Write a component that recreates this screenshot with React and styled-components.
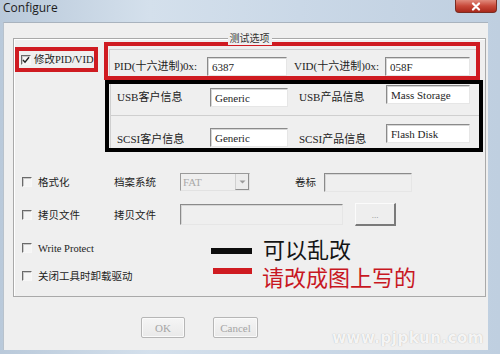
import React from "react";
import styled, { createGlobalStyle } from "styled-components";

const Global = createGlobalStyle`
  html, body { margin: 0; padding: 0; }
  body {
    width: 500px; height: 354px; overflow: hidden;
    background: #c5d3e2;
    font-family: "Liberation Serif", "Noto Sans CJK SC", serif;
  }
`;

const Frame = styled.div`
  position: relative;
  width: 500px; height: 354px;
  display: flex; flex-direction: column;
  overflow: hidden;
  background: linear-gradient(90deg, #b9c9da 0%, #d4e0ec 30%, #cad8e7 60%, #bfcfe0 100%);
`;

const TitleBar = styled.div`
  flex: none; height: 22px;
  display: flex; align-items: flex-start; justify-content: space-between;
`;

const Title = styled.span`
  font-family: "Open Sans", "DejaVu Sans", sans-serif;
  font-size: 12px; line-height: 16px; color: #1c1c1c;
  padding: 0 0 0 3px;
`;

const Close = styled.div`
  width: 42px; height: 13px; margin-right: 3px;
  box-sizing: border-box;
  border: 1px solid #7a2c22; border-top: none;
  border-radius: 0 0 4px 4px;
  background: linear-gradient(#e08a7c, #c8493a 50%, #a9281b);
  display: flex; align-items: center; justify-content: center;
`;

const Client = styled.div`
  flex: 1;
  margin: 0 12px 4px 3px;
  background: #efefef;
  border-top: 1px solid #a9b3be;
  border-left: 1px solid #b8c2cc;
  display: flex; flex-direction: column;
  padding: 15px 0 0 9px;
`;

const GroupBox = styled.div`
  position: relative;
  width: 473px; height: 259px;
  box-sizing: border-box;
  border: 1px solid #a9a9a9;
  box-shadow: inset 1px 1px 0 #ffffff;
  display: flex; flex-direction: column;
`;

const Caption = styled.span`
  position: absolute; top: -8px; left: 50%;
  transform: translateX(-50%);
  padding: 0 2px;
  background: #efefef;
  font-family: "Noto Sans CJK SC", sans-serif;
  font-size: 10px; line-height: 14px; color: #333;
`;

const TopSection = styled.div`
  display: flex; align-items: flex-start;
`;

const MarkBox = styled.div`
  box-sizing: border-box;
  width: ${(p) => p.$w}px; height: ${(p) => p.$h}px;
  border: 4px solid ${(p) => p.$color};
  margin: ${(p) => p.$m || "0"};
  overflow: hidden;
  display: flex; flex-direction: column;
`;

const CheckLine = styled.label`
  display: flex; align-items: center; gap: ${(p) => p.$gap || 6}px;
  padding-left: ${(p) => p.$pl || 0}px;
  font-size: ${(p) => p.$fs || 11}px; line-height: 14px; color: #222;
  white-space: nowrap;
  flex: ${(p) => (p.$grow ? 1 : "none")};
`;

const Box = styled.span`
  flex: none;
  width: 10px; height: 10px; box-sizing: border-box;
  border-top: 1px solid #6a6a6a; border-left: 1px solid #6a6a6a;
  border-right: 1px solid #f7f7f7; border-bottom: 1px solid #f7f7f7;
  box-shadow: inset 1px 1px 0 #c9c9c9;
  background: #f5f5f5;
  display: flex; align-items: center; justify-content: center;
`;

const RightCol = styled.div`
  margin: 3px 0 0 6px;
  display: flex; flex-direction: column;
`;

const Panel = styled.div`
  flex: ${(p) => (p.$h ? "none" : 1)};
  margin-left: 1px;
  border-left: 1px solid #cfcfcf;
  border-top: ${(p) => (p.$top ? "1px solid #cfcfcf" : "none")};
  display: grid;
  grid-template-columns: ${(p) => p.$cols};
  align-items: start;
  padding: ${(p) => p.$pt}px 0 0 ${(p) => p.$pl}px;
  margin-top: ${(p) => p.$mt || 0}px;
  height: ${(p) => (p.$h ? `${p.$h}px` : "auto")};
  box-sizing: border-box;
`;

const Label = styled.span`
  font-size: ${(p) => p.$fs || 11}px; line-height: 19px; color: #222;
  padding-left: ${(p) => p.$pl || 0}px;
  white-space: nowrap;
  margin-top: ${(p) => p.$dy || 0}px;
`;

const Field = styled.div`
  width: ${(p) => p.$w}px; height: ${(p) => p.$h || 19}px;
  box-sizing: border-box;
  background: ${(p) => (p.$disabled ? "#efefef" : "#ffffff")};
  border-top: 1px solid #8a8a8a; border-left: 1px solid #8a8a8a;
  border-right: 1px solid #e6e6e6; border-bottom: 1px solid #e6e6e6;
  box-shadow: inset 1px 1px 0 #d6d6d6;
  font-size: 11px; line-height: 13px; color: #1e1e1e;
  padding: 3px 0 0 4px;
  margin-top: ${(p) => p.$dy || 0}px;
  white-space: nowrap; overflow: hidden;
`;

const LowerRow = styled.div`
  display: flex; align-items: center;
  height: ${(p) => p.$h}px;
  margin-top: ${(p) => p.$mt}px;
  padding-left: 8px;
`;

const Cell = styled.div`
  flex: none;
  width: ${(p) => p.$w}px;
  display: flex; align-items: center;
`;

const CnText = styled.span`
  font-family: "Noto Sans CJK SC", sans-serif;
  font-size: 10.5px; line-height: 14px; color: #222;
  padding-left: ${(p) => p.$pl || 0}px;
  white-space: nowrap;
`;

const Combo = styled.div`
  width: 70px; height: 18px; box-sizing: border-box;
  border-top: 1px solid #9a9a9a; border-left: 1px solid #9a9a9a;
  border-right: 1px solid #e2e2e2; border-bottom: 1px solid #e2e2e2;
  background: #efefef;
  display: flex; align-items: stretch;
`;

const ComboText = styled.span`
  flex: 1;
  font-size: 11px; line-height: 16px; color: #a9a9a9;
  padding-left: 2px;
`;

const ComboArrow = styled.span`
  width: 14px; box-sizing: border-box;
  border-left: 1px solid #d0d0d0;
  border-right: 1px solid #8f8f8f; border-bottom: 1px solid #8f8f8f;
  background: #ececec;
  display: flex; align-items: center; justify-content: center;
`;

const DotsBtn = styled.div`
  width: 41px; height: 23px; box-sizing: border-box;
  margin-left: ${(p) => p.$ml}px;
  border-top: 1px solid #fbfbfb; border-left: 1px solid #fbfbfb;
  border-right: 2px solid #7a7a7a; border-bottom: 2px solid #7a7a7a;
  background: #eeeeee;
  display: flex; align-items: flex-end; justify-content: center;
  font-size: 9px; line-height: 12px; color: #8a8a8a;
  padding-bottom: 3px;
`;

const LegendItem = styled.div`
  display: flex; align-items: center; gap: ${(p) => p.$gap}px;
  margin-left: ${(p) => p.$ml || 0}px;
  height: 22px;
`;

const LegendLine = styled.span`
  width: ${(p) => p.$w}px; height: 6px;
  background: ${(p) => p.$color};
  margin-top: ${(p) => p.$dy || 0}px;
`;

const LegendText = styled.span`
  font-family: "Noto Sans CJK SC", sans-serif;
  font-size: 22px; line-height: 22px;
  color: ${(p) => p.$color};
  white-space: nowrap;
`;

const ButtonRow = styled.div`
  display: flex; gap: 28px;
  margin: 20px 0 0 128px;
`;

const Btn = styled.div`
  width: ${(p) => p.$w}px; height: 21px; box-sizing: border-box;
  border: 1px solid #b6b6b6; border-radius: 2px;
  box-shadow: inset 0 0 0 1px #fafafa;
  background: linear-gradient(#f5f5f5, #e9e9e9);
  display: flex; align-items: center; justify-content: center;
  font-size: 11px; color: #a5a5a5;
`;

const Watermark = styled.div`
  position: absolute; right: 16px; bottom: 7px;
  font-family: "DejaVu Sans", sans-serif; font-weight: bold;
  font-size: 15px; letter-spacing: 0.5px;
  color: rgba(255, 255, 255, 0.9);
  text-shadow: 0 0 1px rgba(140, 140, 140, 0.7);
`;

const Check = () => (
  <svg width="8" height="8" viewBox="0 0 8 8">
    <path d="M1 4 L3 6.2 L7 1.2" fill="none" stroke="#222" strokeWidth="1.4" />
  </svg>
);

const X = () => (
  <svg width="10" height="9" viewBox="0 0 10 9">
    <path d="M2 1.5 L8 7.5 M8 1.5 L2 7.5" stroke="#fff" strokeWidth="2.2" strokeLinecap="round" />
  </svg>
);

const Arrow = () => (
  <svg width="7" height="4" viewBox="0 0 7 4">
    <path d="M0.5 0.5 L3.5 3.5 L6.5 0.5 Z" fill="#9a9a9a" />
  </svg>
);

const RED = "#cf1b21";
const TOP_COLS = "93px 80px 98px 85px";
const BOT_COLS = "93px 78px 98px 84px";

export default function App() {
  return (
    <>
      <Global />
      <Frame>
        <TitleBar>
          <Title>Configure</Title>
          <Close>
            <X />
          </Close>
        </TitleBar>
        <Client>
          <GroupBox>
            <Caption>测试选项</Caption>
            <TopSection>
              <MarkBox $w={83} $h={25} $color={RED} $m="8px 0 0 1px">
                <CheckLine $pl={2} $gap={3} $fs={10.5} $grow>
                  <Box>
                    <Check />
                  </Box>
                  修改PID/VID
                </CheckLine>
              </MarkBox>
              <RightCol>
                <MarkBox $w={376} $h={38} $color={RED}>
                  <Panel $top $cols={TOP_COLS} $pt={7} $pl={4} $mt={3}>
                    <Label>PID(十六进制)0x:</Label>
                    <Field $w={80}>6387</Field>
                    <Label $pl={7}>VID(十六进制)0x:</Label>
                    <Field $w={85}>058F</Field>
                  </Panel>
                </MarkBox>
                <MarkBox $w={378} $h={72} $color="#000" $m="0 0 0 1px">
                  <Panel $cols={BOT_COLS} $pt={4} $pl={6} $h={31}>
                    <Label>USB客户信息</Label>
                    <Field $w={78}>Generic</Field>
                    <Label $pl={11}>USB产品信息</Label>
                    <Field $w={84} $dy={-3}>Mass Storage</Field>
                  </Panel>
                  <Panel $top $cols={BOT_COLS} $pt={12} $pl={6}>
                    <Label $dy={2}>SCSI客户信息</Label>
                    <Field $w={78}>Generic</Field>
                    <Label $pl={11} $dy={2}>SCSI产品信息</Label>
                    <Field $w={84} $dy={-4}>Flash Disk</Field>
                  </Panel>
                </MarkBox>
              </RightCol>
            </TopSection>

            <LowerRow $h={20} $mt={20}>
              <Cell $w={92}>
                <CheckLine>
                  <Box />
                  <CnText>格式化</CnText>
                </CheckLine>
              </Cell>
              <Cell $w={66}>
                <CnText>档案系统</CnText>
              </Cell>
              <Combo>
                <ComboText>FAT</ComboText>
                <ComboArrow>
                  <Arrow />
                </ComboArrow>
              </Combo>
              <Cell $w={74}>
                <CnText $pl={45}>卷标</CnText>
              </Cell>
              <Field $w={88} $disabled />
            </LowerRow>

            <LowerRow $h={23} $mt={11}>
              <Cell $w={92}>
                <CheckLine>
                  <Box />
                  <CnText>拷贝文件</CnText>
                </CheckLine>
              </Cell>
              <Cell $w={66}>
                <CnText>拷贝文件</CnText>
              </Cell>
              <Field $w={163} $h={21} $disabled />
              <DotsBtn $ml={12}>...</DotsBtn>
            </LowerRow>

            <LowerRow $h={22} $mt={11}>
              <Cell $w={189}>
                <CheckLine>
                  <Box />
                  <Label $fs={10.5}>Write Protect</Label>
                </CheckLine>
              </Cell>
              <LegendItem $gap={11}>
                <LegendLine $w={41} $color="#0d0d0d" $dy={6} />
                <LegendText $color="#141414">可以乱改</LegendText>
              </LegendItem>
            </LowerRow>

            <LowerRow $h={22} $mt={6}>
              <Cell $w={189}>
                <CheckLine>
                  <Box />
                  <CnText>关闭工具时卸载驱动</CnText>
                </CheckLine>
              </Cell>
              <LegendItem $gap={10} $ml={2}>
                <LegendLine $w={39} $color={RED} $dy={-10} />
                <LegendText $color="#c8171f">请改成图上写的</LegendText>
              </LegendItem>
            </LowerRow>
          </GroupBox>

          <ButtonRow>
            <Btn $w={44}>OK</Btn>
            <Btn $w={45}>Cancel</Btn>
          </ButtonRow>
        </Client>
        <Watermark>www.pjpkun.com</Watermark>
      </Frame>
    </>
  );
}
